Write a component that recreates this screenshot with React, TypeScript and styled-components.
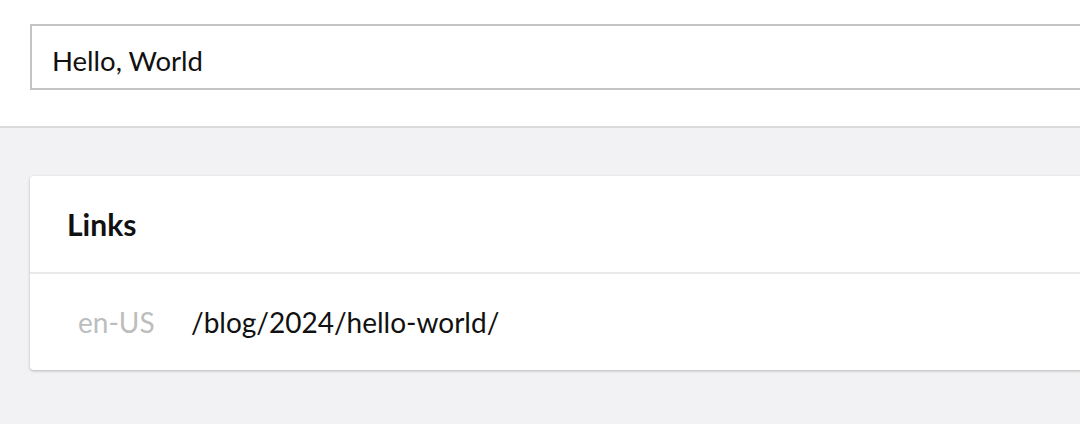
import React from 'react';
import styled, { createGlobalStyle } from 'styled-components';

const GlobalStyle = createGlobalStyle`
  html, body {
    margin: 0;
    padding: 0;
    overflow: hidden;
    background-color: #f2f2f4;
    font-family: Lato, 'Open Sans', sans-serif;
    color: #111;
  }
`;

const Page = styled.div`
  width: 1180px;
  min-height: 424px;
`;

const Header = styled.header`
  background-color: #fff;
  padding: 24px 0 36px 30px;
  border-bottom: 2px solid #dadada;
`;

const TitleInput = styled.input`
  box-sizing: border-box;
  display: block;
  width: 100%;
  height: 66px;
  padding: 6px 20px 0;
  border: 2px solid #c4c4c4;
  border-radius: 0;
  font-family: inherit;
  font-size: 27.5px;
  color: #111;
  outline: none;
`;

const Main = styled.main`
  padding: 48px 0 0 30px;
`;

const Card = styled.section`
  background-color: #fff;
  border-radius: 4px;
  box-shadow: 0 1px 3px rgba(0, 0, 0, 0.25);
`;

const CardHeader = styled.div`
  display: flex;
  align-items: center;
  height: 96px;
  padding-left: 37px;
  border-bottom: 2px solid #e9e9ea;
`;

const CardTitle = styled.h2`
  margin: 0;
  font-size: 30px;
  font-weight: 700;
  color: #111;
`;

const LinkRow = styled.div`
  display: flex;
  align-items: center;
  height: 96px;
  padding-left: 48px;
  font-size: 28px;
`;

const Locale = styled.span`
  width: 113px;
  color: #bdbdbd;
`;

const Path = styled.span`
  color: #111;
`;

const links = [{ locale: 'en-US', path: '/blog/2024/hello-world/' }];

const App: React.FC = () => (
  <>
    <GlobalStyle />
    <Page>
      <Header>
        <TitleInput defaultValue="Hello, World" />
      </Header>
      <Main>
        <Card>
          <CardHeader>
            <CardTitle>Links</CardTitle>
          </CardHeader>
          {links.map((link) => (
            <LinkRow key={link.locale}>
              <Locale>{link.locale}</Locale>
              <Path>{link.path}</Path>
            </LinkRow>
          ))}
        </Card>
      </Main>
    </Page>
  </>
);

export default App;
